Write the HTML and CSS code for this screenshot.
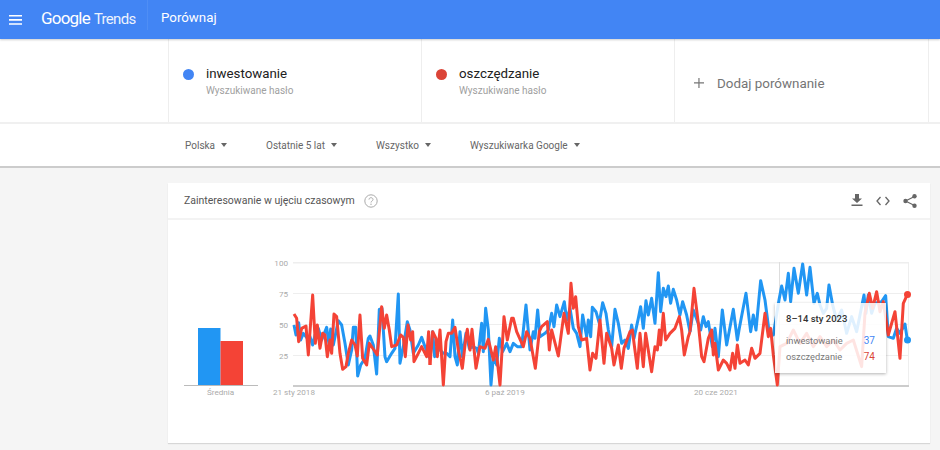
FILE: index.html
```html
<!DOCTYPE html>
<html lang="pl">
<head>
    <meta charset="UTF-8">
    <meta name="viewport" content="width=device-width, initial-scale=1.0">
    <title>Google Trends - Porównaj</title>
    <link rel="stylesheet" href="styles.css">
</head>
<body>
    <header class="topbar">
        <svg class="menu-icon" width="14" height="10" viewBox="0 0 14 10"><path d="M0 0h13v1.6H0zM0 4.1h13v1.6H0zM0 8.2h13v1.6H0z" fill="#fff"/></svg>
        <div class="logo"><span class="logo-google">Google</span> <span class="logo-trends">Trends</span></div>
        <div class="topbar-title">Porównaj</div>
    </header>

    <section class="terms">
        <div class="term">
            <span class="dot dot-blue"></span>
            <div>
                <div class="term-name">inwestowanie</div>
                <div class="term-type">Wyszukiwane hasło</div>
            </div>
        </div>
        <div class="term">
            <span class="dot dot-red"></span>
            <div>
                <div class="term-name">oszczędzanie</div>
                <div class="term-type">Wyszukiwane hasło</div>
            </div>
        </div>
        <div class="term term-add">
            <svg width="10" height="10" viewBox="0 0 11 11"><path d="M4.8 0h1.3v4.8H11v1.3H6.1V11H4.8V6.1H0V4.8h4.8z" fill="#757575"/></svg>
            <span>Dodaj porównanie</span>
        </div>
    </section>

    <section class="filters">
        <div class="filter filter-geo">Polska <i class="caret"></i></div>
        <div class="filter filter-time">Ostatnie 5 lat <i class="caret"></i></div>
        <div class="filter filter-cat">Wszystko <i class="caret"></i></div>
        <div class="filter">Wyszukiwarka Google <i class="caret"></i></div>
    </section>

    <main class="content">
        <div class="card">
            <div class="card-head">
                <span class="card-title">Zainteresowanie w ujęciu czasowym</span>
                <svg class="help" width="14" height="14" viewBox="0 0 14 14">
                    <circle cx="7" cy="7" r="6.2" fill="none" stroke="#aaa" stroke-width="1"/>
                    <path d="M5 5.6c0-1.2.9-1.9 2-1.9s2 .7 2 1.8c0 1.5-2 1.5-2 3" fill="none" stroke="#aaa" stroke-width="1"/>
                    <circle cx="7" cy="10.2" r=".7" fill="#aaa"/>
                </svg>
                <div class="card-actions">
                    <svg width="12" height="13" viewBox="0 0 12 13"><path d="M4 0h4v4.5h3L6 9 1 4.5h3zM.5 10.6h11V12H.5z" fill="#666"/></svg>
                    <svg width="14" height="10" viewBox="0 0 14 10"><path d="M4.5 1 1 5l3.5 4M9.5 1 13 5 9.5 9" fill="none" stroke="#666" stroke-width="1.3"/></svg>
                    <svg width="14" height="14" viewBox="0 0 14 14"><path d="M11.5 2.5 2.5 7l9 4.5" fill="none" stroke="#666" stroke-width="1.2"/><circle cx="11.5" cy="2.3" r="2.2" fill="#666"/><circle cx="2.5" cy="7" r="2.2" fill="#666"/><circle cx="11.5" cy="11.7" r="2.2" fill="#666"/></svg>
                </div>
            </div>
            <div class="card-body">
                <svg class="chart" width="762" height="223" viewBox="168 220 762 223">
                    <!-- srednia -->
                    <rect x="198" y="328" width="22.5" height="57" fill="#2196f3"/>
                    <rect x="220.5" y="341" width="22.5" height="44" fill="#f44336"/>
                    <rect x="184" y="385" width="74" height="1" fill="#bbb"/>
                    <text class="axis" x="220.5" y="395" text-anchor="middle">Średnia</text>

                    <!-- siatka -->
                    <g fill="#eee">
                        <rect x="293" y="262" width="615" height="1.5"/>
                        <rect x="293" y="293" width="615" height="1"/>
                        <rect x="293" y="324" width="615" height="1"/>
                        <rect x="293" y="355" width="615" height="1"/>
                        <rect x="908" y="262" width="1" height="123"/>
                    </g>
                    <rect x="293" y="385" width="616" height="2" fill="#ccc"/>
                    <rect x="779" y="262" width="1" height="123" fill="#ddd"/>
                    <g class="axis" text-anchor="end">
                        <text x="288" y="266">100</text>
                        <text x="288" y="297">75</text>
                        <text x="288" y="328">50</text>
                        <text x="288" y="359">25</text>
                    </g>
                    <g class="axis">
                        <text x="273" y="395">21 sty 2018</text>
                        <text x="485" y="395">6 paź 2019</text>
                        <text x="694" y="395">20 cze 2021</text>
                    </g>

                    <!-- punkty odczytane z wykresu, w trzech odcinkach -->
                    <g class="line line-blue">
                        <polyline transform="translate(170 250) scale(.3333)" points="372,225 378,255 386,218 392,270 400,250 412,265 420,260 428,285 435,255 445,235 455,270 470,232 478,290 482,237 490,285 505,212 515,225 525,280 535,345 545,300 550,232 557,232 563,378 572,345 585,325 595,265 600,258 610,285 620,372 628,178 636,175 645,320 650,335 665,310 675,295 685,132 690,340 700,290 712,215 720,240 730,310 745,285 755,262 765,290 780,325"/>
                        <polyline transform="translate(430 250) scale(.3333)" points="0,325 8,245 14,320 22,290 30,300 40,310 50,310 60,320 68,210 75,320 82,345 90,245 97,320 108,250 118,295 128,290 140,295 145,310 155,220 160,305 167,175 175,240 183,405 190,320 200,345 208,265 218,305 230,280 240,305 250,280 262,290 275,290 288,165 300,300 310,245 315,265 323,180 330,260 345,250 355,240 365,190 372,230 380,165 390,200 403,155 410,210 420,175 430,235 440,250 450,290 458,195 470,260 475,210 482,260 487,172 498,185 508,220 518,158 528,190 535,240 545,290 555,178 565,220 575,280 585,270 595,295 605,225 612,265 625,205 632,170 640,235 648,152 655,195 665,145 675,220 685,68 692,185 700,115 708,140 715,108 722,160 730,118 740,150 750,195 758,155 770,195 780,245"/>
                        <polyline transform="translate(680 250) scale(.3333)" points="30,245 40,180 62,240 70,200 78,230 85,215 97,290 105,235 115,320 127,180 140,285 160,178 172,270 178,235 198,130 212,245 220,195 228,240 242,92 255,150 268,250 280,255 297,150 305,108 315,150 325,70 332,155 342,55 355,130 368,42 380,135 390,52 402,160 412,130 420,165 430,190 440,175 447,105 458,165 470,210 485,180 500,250 515,200 530,245 552,135 558,190 565,135 575,190 585,160 605,155 617,137 625,260 640,265 650,235 660,250 675,222 682,270"/>
                    </g>
                    <g class="line line-red">
                        <polyline transform="translate(170 250) scale(.3333)" points="372,192 380,205 386,275 395,235 408,228 415,315 428,135 436,280 442,225 450,295 458,250 465,255 472,320 480,270 485,310 492,192 500,200 510,310 518,358 528,350 535,310 545,270 555,285 562,318 570,195 578,325 590,345 598,280 612,300 622,315 635,170 643,235 650,195 658,240 665,290 680,285 692,255 700,262 706,320 714,225 722,270 728,245 732,335 745,310 755,290 770,320 776,245 780,345"/>
                        <polyline transform="translate(430 250) scale(.3333)" points="0,345 8,245 18,265 22,320 30,240 40,405 48,275 55,250 65,250 75,232 85,300 97,355 108,260 112,238 120,300 126,238 138,355 150,290 165,295 175,268 190,330 197,290 210,405 222,200 232,270 245,205 250,205 260,245 280,290 290,245 300,265 316,355 328,245 335,230 352,215 358,300 365,240 385,318 402,190 415,250 423,100 430,175 437,140 445,230 455,270 470,265 480,360 488,310 498,325 510,210 522,340 530,250 545,295 552,345 565,285 574,355 582,295 600,245 607,240 622,355 630,250 640,350 647,250 665,365 675,290 682,300 688,240 692,285 700,190 707,270 720,250 735,235 748,200 755,240 763,315 775,260 780,245"/>
                        <polyline transform="translate(680 250) scale(.3333)" points="30,245 42,115 55,220 65,320 72,335 85,265 95,240 100,315 105,280 115,360 130,330 140,340 150,360 158,310 165,355 172,285 180,340 195,330 205,345 215,295 225,325 240,310 255,190 265,260 272,235 280,315 292,405 300,290 320,280 340,240 360,280 380,250 400,290 420,260 440,290 460,270 480,300 500,280 520,270 545,350 555,190 568,130 578,175 590,125 600,185 610,155 625,255 645,185 660,325 670,160 682,134"/>
                    </g>
                    <circle cx="907.5" cy="340" r="3.5" fill="#2196f3"/>
                    <circle cx="907.5" cy="294.5" r="3.5" fill="#f44336"/>
                </svg>
                <div class="tooltip">
                    <div class="tooltip-date">8–14 sty 2023</div>
                    <div class="tooltip-row"><span>inwestowanie</span><b class="val-blue">37</b></div>
                    <div class="tooltip-row"><span>oszczędzanie</span><b class="val-red">74</b></div>
                </div>
            </div>
        </div>
    </main>
</body>
</html>
```

FILE: styles.css
```css
html, body {
    height: 450px;
    overflow: hidden;
}
body {
    margin: 0;
    font-family: Roboto, Arial, sans-serif;
    background-color: #f5f5f5;
    color: #333;
}
.topbar {
    display: flex;
    align-items: center;
    height: 39px;
    background-color: #4285f4;
    box-shadow: 0 1px 2px rgba(0, 0, 0, 0.2);
    color: #fff;
    padding-left: 9px;
    box-sizing: border-box;
    position: relative;
}
.menu-icon {
    margin-right: 18px;
}
.logo {
    display: flex;
    align-items: baseline;
    gap: 4px;
    width: 106px;
    height: 30px;
    line-height: 37px;
    border-right: 1px solid #4f8ef5;
    margin-bottom: 9px;
}
.logo-google {
    font-size: 17px;
    letter-spacing: -0.8px;
}
.logo-trends {
    font-size: 15px;
    letter-spacing: -0.7px;
    opacity: 0.9;
}
.topbar-title {
    margin-left: 13px;
    font-size: 13.3px;
    margin-top: -5px;
}
.terms {
    display: flex;
    height: 83px;
    padding-left: 168px;
    background-color: #fff;
    border-bottom: 2px solid #f0f0f0;
}
.term {
    display: flex;
    align-items: flex-start;
    width: 253px;
    border-left: 1px solid #eee;
    padding: 26px 0 0 14px;
    box-sizing: border-box;
}
.term-add {
    align-items: center;
    width: 255px;
    padding: 5px 0 0 19px;
    border-right: 1px solid #eee;
    color: #757575;
    font-size: 13.4px;
    gap: 13px;
}
.dot {
    width: 11px;
    height: 11px;
    border-radius: 50%;
    margin: 3.5px 12px 0 0;
}
.dot-blue {
    background-color: #4285f4;
}
.dot-red {
    background-color: #db4437;
}
.term-name {
    font-size: 13.3px;
    color: #212121;
    line-height: 18px;
}
.term-type {
    font-size: 10px;
    color: #a0a0a0;
    line-height: 14px;
    margin-top: 1px;
}
.filters {
    display: flex;
    align-items: center;
    height: 42px;
    padding-left: 185px;
    background-color: #fff;
    border-bottom: 2px solid #ccc;
    font-size: 10px;
    color: #666;
}
.filter {
    display: flex;
    align-items: center;
    gap: 6px;
}
.filter-geo {
    width: 81px;
}
.filter-time {
    width: 110px;
}
.filter-cat {
    width: 94px;
}
.caret {
    width: 0;
    height: 0;
    border-left: 3.5px solid transparent;
    border-right: 3.5px solid transparent;
    border-top: 4px solid #666;
}
.content {
    padding: 15px 0 0 168px;
}
.card {
    width: 762px;
    height: 260px;
    background-color: #fff;
    box-shadow: 0 1px 1px rgba(0, 0, 0, 0.12);
}
.card-head {
    display: flex;
    align-items: center;
    height: 37px;
    padding: 0 13px 0 16px;
    border-bottom: 2px solid #f3f3f3;
    box-sizing: border-box;
}
.card-title {
    font-size: 10.5px;
    color: #555;
}
.help {
    margin-left: 9px;
}
.card-actions {
    display: flex;
    align-items: center;
    gap: 13px;
    margin-left: auto;
}
.card-body {
    position: relative;
}
.chart {
    display: block;
}
.axis {
    font-size: 8.1px;
    fill: #aaa;
    font-family: Roboto, Arial, sans-serif;
}
.line polyline {
    fill: none;
    stroke-width: 9;
    stroke-linejoin: round;
}
.line-blue polyline {
    stroke: #2196f3;
}
.line-red polyline {
    stroke: #f44336;
}
.tooltip {
    position: absolute;
    left: 607px;
    top: 83px;
    width: 111px;
    height: 70px;
    padding: 10px 10px 0 11px;
    box-sizing: border-box;
    background-color: rgba(255, 255, 255, 0.86);
    box-shadow: 0 1px 3px rgba(0, 0, 0, 0.3);
}
.tooltip-date {
    font-size: 9.5px;
    font-weight: 500;
    color: #333;
    margin-bottom: 9px;
}
.tooltip-row {
    display: flex;
    justify-content: space-between;
    font-size: 9.3px;
    line-height: 16px;
    color: #777;
    padding-right: 1px;
}
.tooltip-row b {
    font-weight: 400;
    font-size: 10px;
}
.val-blue {
    color: #4285f4;
}
.val-red {
    color: #db4437;
}
```
